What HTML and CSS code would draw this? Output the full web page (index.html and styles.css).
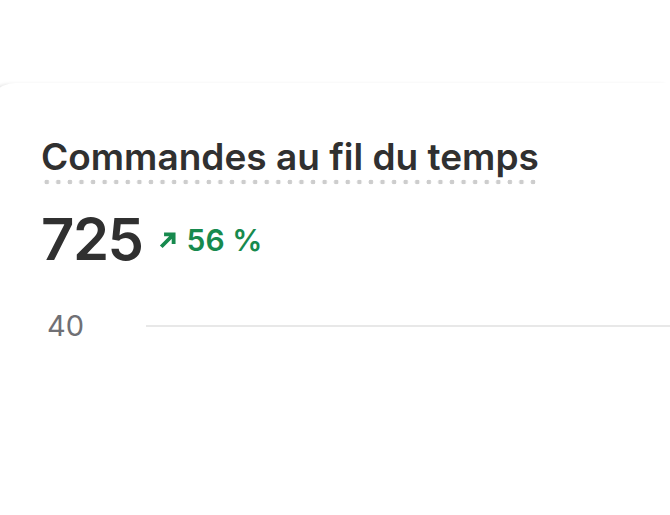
FILE: index.html
```html
<!DOCTYPE html>
<html lang="fr">
<head>
<meta charset="utf-8">
<link rel="stylesheet" href="styles.css">
</head>
<body>
<div class="card">
  <h2 class="title"><span class="dotted">Commandes au fil du temps</span></h2>
  <div class="metric">
    <span class="value">725</span>
    <span class="trend">
      <svg class="arrow" viewBox="0 0 16 16" width="18" height="18"><path d="M2 14 L12 4 M4.5 3 H13 V11.5" fill="none" stroke="currentColor" stroke-width="3.4" stroke-linecap="butt"/></svg>
      <span>56 %</span>
    </span>
  </div>
  <div class="axis-row">
    <span class="axis-label">40</span>
    <span class="gridline"></span>
  </div>
</div>
</body>
</html>
```
FILE: styles.css
```css
html, body {
  margin: 0;
  padding: 0;
  background: #ffffff;
}
body {
  font-family: Inter, "Noto Sans", sans-serif;
  color: #303030;
  overflow: hidden;
  height: 515px;
}
.card {
  margin-top: 83px;
  margin-left: -14px;
  padding: 50px 0 0 55px;
  height: 432px;
  box-sizing: border-box;
  background: #ffffff;
  border-top-left-radius: 30px;
  box-shadow: -6px 2px 4px rgba(0, 0, 0, 0.16);
}
.title {
  margin: 0;
  font-size: 37px;
  font-weight: 600;
  line-height: 48px;
  letter-spacing: 0;
}
.dotted {
  display: inline-block;
  padding-bottom: 4px;
  background-image: radial-gradient(circle, #cdcdcd 2.1px, transparent 2.6px);
  background-size: 11.5px 6px;
  background-position: 0 100%;
  background-repeat: space no-repeat;
}
.metric {
  display: flex;
  align-items: center;
  margin-top: 22px;
  gap: 16px;
}
.value {
  font-size: 58px;
  font-weight: 600;
  letter-spacing: -1.5px;
  line-height: 64px;
}
.trend {
  display: flex;
  align-items: center;
  gap: 10px;
  color: #178a4e;
  font-size: 30px;
  font-weight: 600;
  padding-top: 2px;
}
.arrow {
  display: block;
}
.axis-row {
  display: flex;
  align-items: center;
  margin-top: 37px;
  margin-left: 6px;
}
.axis-label {
  font-size: 29px;
  font-weight: 400;
  color: #707075;
  width: 99px;
}
.gridline {
  flex: 1;
  height: 2px;
  background: #e8e8e8;
}
```
